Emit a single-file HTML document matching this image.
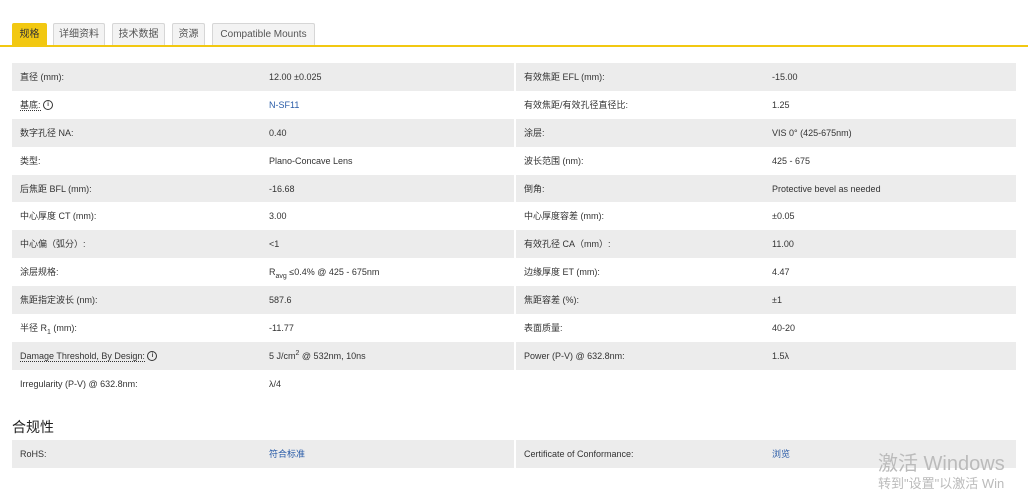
<!DOCTYPE html>
<html><head><style>
body{margin:0;width:1028px;height:489px;background:#fff;font-family:"Liberation Sans","Noto Sans CJK SC",sans-serif;font-size:9px;color:#333;position:relative;overflow:hidden}
.tab{position:absolute;top:23px;height:22px;line-height:22px;border:1px solid #d6d6d6;border-bottom:none;background:#f3f3f3;color:#555;font-size:10px;text-align:center;border-radius:2px 2px 0 0}
.line{position:absolute;top:45px;left:0;width:1028px;height:2px;background:#f2c811}
table{position:absolute;left:12px;border-collapse:collapse;width:1004px;font-size:9px;color:#333}
td{height:27.9px;padding:0 0 0 8px;vertical-align:middle;white-space:nowrap;line-height:10px}
tr:nth-child(odd) td{background:#ececec}
td.c3{border-left:2px solid #fff}
.a{color:#2a5ca8}
.d{border-bottom:1px dotted #333}
sub,sup{font-size:7px;line-height:0}
.i{display:inline-block;width:8px;height:8px;border:1px solid #333;border-radius:50%;font-size:6px;line-height:8px;text-align:center;font-weight:bold;vertical-align:middle}
</style></head><body>
<div class="tab" style="left:12px;width:33px;background:#f2c811;border-color:#f2c811;color:#333">规格</div>
<div class="tab" style="left:53px;width:50px">详细资料</div>
<div class="tab" style="left:112px;width:51px">技术数据</div>
<div class="tab" style="left:172px;width:31px">资源</div>
<div class="tab" style="left:212px;width:101px">Compatible Mounts</div>
<div class="line"></div>
<table style="top:63px">
<colgroup><col style="width:249px"><col style="width:254px"><col style="width:249px"><col></colgroup>
<tr><td>直径 (mm):</td><td>12.00 ±0.025</td><td class="c3">有效焦距 EFL (mm):</td><td>-15.00</td></tr>
<tr><td><span class="d">基底:</span> <span class="i">i</span></td><td class="a">N-SF11</td><td class="c3">有效焦距/有效孔径直径比:</td><td>1.25</td></tr>
<tr><td>数字孔径 NA:</td><td>0.40</td><td class="c3">涂层:</td><td>VIS 0° (425-675nm)</td></tr>
<tr><td>类型:</td><td>Plano-Concave Lens</td><td class="c3">波长范围 (nm):</td><td>425 - 675</td></tr>
<tr><td>后焦距 BFL (mm):</td><td>-16.68</td><td class="c3">倒角:</td><td>Protective bevel as needed</td></tr>
<tr><td>中心厚度 CT (mm):</td><td>3.00</td><td class="c3">中心厚度容差 (mm):</td><td>±0.05</td></tr>
<tr><td>中心偏（弧分）:</td><td>&lt;1</td><td class="c3">有效孔径 CA（mm）:</td><td>11.00</td></tr>
<tr><td>涂层规格:</td><td>R<sub>avg</sub> ≤0.4% @ 425 - 675nm</td><td class="c3">边缘厚度 ET (mm):</td><td>4.47</td></tr>
<tr><td>焦距指定波长 (nm):</td><td>587.6</td><td class="c3">焦距容差 (%):</td><td>±1</td></tr>
<tr><td>半径 R<sub>1</sub> (mm):</td><td>-11.77</td><td class="c3">表面质量:</td><td>40-20</td></tr>
<tr><td><span class="d">Damage Threshold, By Design:</span> <span class="i">i</span></td><td>5 J/cm<sup>2</sup> @ 532nm, 10ns</td><td class="c3">Power (P-V) @ 632.8nm:</td><td>1.5λ</td></tr>
<tr><td style="background:#fff">Irregularity (P-V) @ 632.8nm:</td><td style="background:#fff">λ/4</td><td style="background:#fff"></td><td style="background:#fff"></td></tr>
</table>
<div style="position:absolute;left:12px;top:417px;font-size:14px;color:#222">合规性</div>
<table style="top:440px">
<colgroup><col style="width:249px"><col style="width:254px"><col style="width:249px"><col></colgroup>
<tr><td>RoHS:</td><td class="a">符合标准</td><td class="c3">Certificate of Conformance:</td><td class="a">浏览</td></tr>
</table>
<div style="position:absolute;left:878px;top:447px;font-size:20px;color:#bbb">激活 Windows</div>
<div style="position:absolute;left:878px;top:473px;font-size:13px;color:#bbb;white-space:nowrap">转到"设置"以激活 Win</div>
</body></html>
